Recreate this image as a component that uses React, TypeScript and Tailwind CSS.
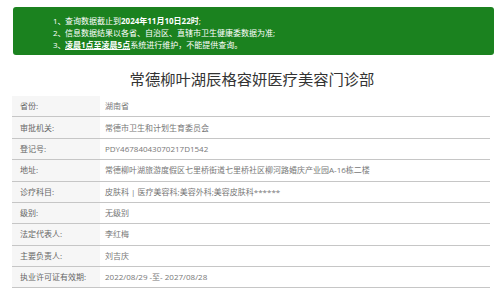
import React from "react";

const rows: [string, string][] = [
  ["省份:", "湖南省"],
  ["审批机关:", "常德市卫生和计划生育委员会"],
  ["登记号:", "PDY46784043070217D1542"],
  ["地址:", "常德柳叶湖旅游度假区七里桥街道七里桥社区柳河路婚庆产业园A-16栋二楼"],
  ["诊疗科目:", "皮肤科 | 医疗美容科;美容外科;美容皮肤科******"],
  ["级别:", "无级别"],
  ["法定代表人:", "李红梅"],
  ["主要负责人:", "刘吉庆"],
  ["执业许可证有效期:", "2022/08/29 -至- 2027/08/28"],
];

export default function App() {
  return (
    <div
      className="w-[500px] h-[299px] bg-white overflow-hidden"
      style={{ fontFamily: '"Open Sans", "Noto Sans CJK SC", sans-serif' }}
    >
      <div className="pt-[7px] pl-[13px]">
        <div className="w-[481px] h-[48px] bg-[#1b821f] rounded-[3px] text-white text-[8px] leading-[12px] pt-[8px] pl-[40px]">
          <div className="flex">
            <span className="w-[12px]">1、</span>
            <span>
              查询数据截止到<b>2024年11月10日22时</b>;
            </span>
          </div>
          <div className="flex">
            <span className="w-[12px]">2、</span>
            <span>信息数据结果以各省、自治区、直辖市卫生健康委数据为准;</span>
          </div>
          <div className="flex">
            <span className="w-[12px]">3、</span>
            <span>
              <b className="underline">凌晨1点至凌晨5点</b>系统进行维护，不能提供查询。
            </span>
          </div>
        </div>
      </div>
      <div className="mt-[14px] h-[21px] text-center text-[15.3px] leading-[21px] text-[#333] pl-[4px]">
        常德柳叶湖辰格容妍医疗美容门诊部
      </div>
      <div className="mt-[6px] ml-[12px] w-[478px] text-[8px]">
        {rows.map(([k, v], i) => (
          <div
            key={i}
            className="flex items-center h-[21.375px] border-b border-[#c6c6c6] box-border"
          >
            <div className="w-[88px] h-full bg-[#f6f6f6] flex items-center pl-[8px] text-[#666]">
              {k}
            </div>
            <div className="pl-[5px] text-[#777] whitespace-nowrap">{v}</div>
          </div>
        ))}
      </div>
    </div>
  );
}
